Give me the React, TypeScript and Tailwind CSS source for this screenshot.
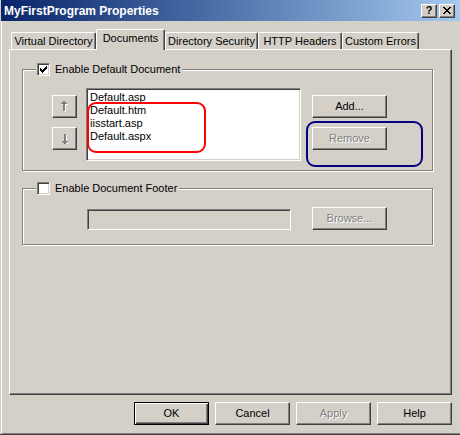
import React from 'react';

const raised =
  'border border-t-white border-l-white border-r-[#404040] border-b-[#404040] shadow-[inset_-1px_-1px_0_#808080] bg-[#d4d0c8]';
const sunken =
  'border border-t-[#808080] border-l-[#808080] border-r-white border-b-white shadow-[inset_1px_1px_0_#404040,inset_-1px_-1px_0_#d4d0c8]';
const disabledText = 'text-[#808080] [text-shadow:1px_1px_0_#fff]';

function Button({ label, disabled, isDefault }: { label: string; disabled?: boolean; isDefault?: boolean }) {
  const frame = isDefault
    ? 'border border-black bg-[#d4d0c8] shadow-[inset_1px_1px_0_#fff,inset_-1px_-1px_0_#404040,inset_-2px_-2px_0_#808080]'
    : raised;
  return (
    <div className={`w-[75px] h-[23px] flex items-center justify-center ${frame} ${disabled ? disabledText : 'text-black'}`}>
      {label}
    </div>
  );
}

function ArrowButton({ down }: { down?: boolean }) {
  // greyed-out arrow, drawn pixel by pixel with a white etched shadow
  const shape = (
    <>
      <rect x="2" y="0" width="2" height="1" />
      <rect x="1" y="1" width="4" height="1" />
      <rect x="0" y="2" width="6" height="1" />
      <rect x="2" y="3" width="2" height="7" />
    </>
  );
  return (
    <div className={`w-[25px] h-[23px] flex items-center justify-center ${raised}`}>
      <svg width="7" height="11" viewBox="0 0 7 11" shapeRendering="crispEdges" className={down ? 'rotate-180' : ''}>
        <g fill="#fff" transform={down ? 'translate(-1 -1)' : 'translate(1 1)'}>{shape}</g>
        <g fill="#808080">{shape}</g>
      </svg>
    </div>
  );
}

function Checkbox({ checked }: { checked?: boolean }) {
  return (
    <span className={`w-[13px] h-[13px] bg-white flex items-center justify-center ${sunken}`}>
      {checked && (
        <svg width="7" height="7" viewBox="0 0 7 7" shapeRendering="crispEdges">
          <path d="M0 2h1v1h1v1h1V3h1V2h1V1h1V0h1v3h-1v1h-1v1h-1v1h-1v1h-1V6H1V5H0z" fill="#000" />
        </svg>
      )}
    </span>
  );
}

function Group({ label, checked, children }: { label: string; checked?: boolean; children: React.ReactNode }) {
  return (
    <fieldset className="w-[411px] border border-[#808080] shadow-[1px_1px_0_#fff,inset_1px_1px_0_#fff]">
      <legend className="ml-[13px] pl-[1px] pr-[2px] bg-[#d4d0c8]">
        <span className="flex items-center h-[13px] gap-[5px]">
          <Checkbox checked={checked} />
          <span>{label}</span>
        </span>
      </legend>
      {children}
    </fieldset>
  );
}

const tabs = [
  { name: 'Virtual Directory', w: 'w-[85px]' },
  { name: 'Documents', w: 'w-[69px]', active: true },
  { name: 'Directory Security', w: 'w-[93px]' },
  { name: 'HTTP Headers', w: 'w-[84px]' },
  { name: 'Custom Errors', w: 'w-[77px]' },
];

export default function App() {
  return (
    <div className="relative w-[460px] h-[435px] overflow-hidden bg-[#d4d0c8] border-b border-b-[#404040] flex flex-col font-['Liberation_Sans',Arial,sans-serif] text-[11px] text-black">
      {/* Title bar */}
      <div className="ml-[1px] h-[21px] shrink-0 flex items-center bg-gradient-to-r from-[#0a246a] to-[#a6caf0] pl-[3px] pr-[5px]">
        <span className="text-white font-bold text-[12px] flex-1">MyFirstProgram Properties</span>
        <div className="flex gap-[2px]">
          <div className={`w-[16px] h-[14px] flex items-center justify-center font-bold text-[11px] leading-none ${raised}`}>?</div>
          <div className={`w-[16px] h-[14px] flex items-center justify-center ${raised}`}>
            <svg width="8" height="7" viewBox="0 0 8 7" shapeRendering="crispEdges">
              <path d="M0 0h2v1h1v1h2V1h1V0h2v1H7v1H6v1H5v1h1v1h1v1h1v1H6V6H5V5H3v1H2v1H0V6h1V5h1V4h1V3H2V2H1V1H0z" fill="#000" />
            </svg>
          </div>
        </div>
      </div>

      {/* Dialog body */}
      <div className="flex-1 ml-[1px] border-l border-white border-b border-b-[#808080] flex flex-col">
        {/* Tabs */}
        <div className="mt-[8px] ml-[9px] h-[20px] flex items-end">
          {tabs.map((t) => (
            <div
              key={t.name}
              className={`${t.w} flex items-center justify-center border-t border-l border-t-white border-l-white border-r border-r-[#404040] shadow-[inset_-1px_0_0_#808080] rounded-t-[2px] bg-[#d4d0c8] ${
                t.active ? 'h-[21px] mb-[-1px] relative z-10 pb-[3px]' : 'h-[17px]'
              }`}
            >
              {t.name}
            </div>
          ))}
        </div>

        {/* Tab pane */}
        <div className="ml-[7px] w-[443px] h-[346px] border border-t-white border-l-white border-r-[#404040] border-b-[#404040] shadow-[inset_-1px_-1px_0_#808080] pl-[12px] pt-[13px]">
          <Group label="Enable Default Document" checked>
            <div className="pl-[29px] pt-[12px] pb-[9px] flex items-start">
              <div className="mt-[7px] flex flex-col gap-[9px]">
                <ArrowButton />
                <ArrowButton down />
              </div>
              <div className={`ml-[9px] w-[215px] h-[73px] bg-white pl-[3px] pt-[2px] leading-[13px] ${sunken}`}>
                <div>Default.asp</div>
                <div>Default.htm</div>
                <div>iisstart.asp</div>
                <div>Default.aspx</div>
              </div>
              <div className="ml-[11px] mt-[7px] flex flex-col gap-[9px]">
                <Button label="Add..." />
                <Button label="Remove" disabled />
              </div>
            </div>
          </Group>

          <div className="mt-[11px]">
            <Group label="Enable Document Footer">
              <div className="pl-[64px] pt-[12px] pb-[14px] flex items-end">
                <div className={`w-[204px] h-[21px] bg-[#d4d0c8] ${sunken}`} />
                <div className="ml-[21px]">
                  <Button label="Browse..." disabled />
                </div>
              </div>
            </Group>
          </div>
        </div>

        {/* Dialog buttons */}
        <div className="mt-[7px] pr-[8px] flex justify-end gap-[6px]">
          <Button label="OK" isDefault />
          <Button label="Cancel" />
          <Button label="Apply" disabled />
          <Button label="Help" />
        </div>
      </div>

      {/* Hand-drawn annotations */}
      <div className="absolute left-[87px] top-[102px] w-[119px] h-[51px] border-2 border-[#ff0000] rounded-[9px]" />
      <div className="absolute left-[306px] top-[121px] w-[117px] h-[46px] border-2 border-[#000080] rounded-[9px]" />
    </div>
  );
}
